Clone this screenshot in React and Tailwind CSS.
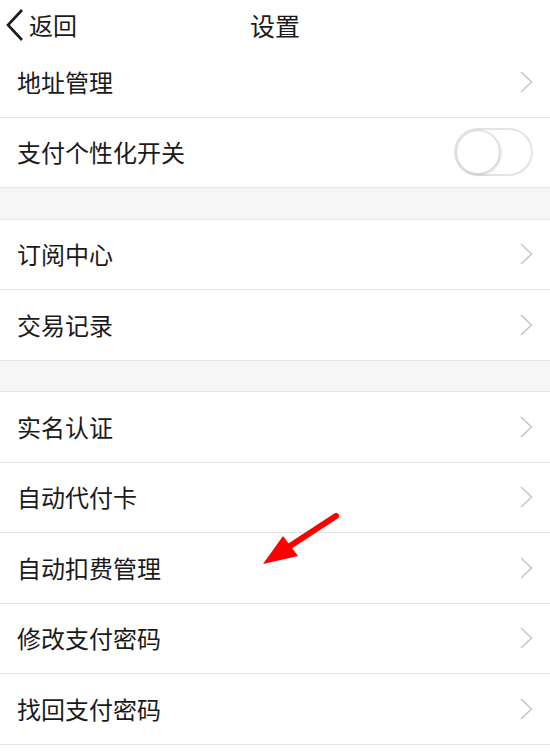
import React from "react"

const font = { fontFamily: '"Noto Sans CJK SC", "Liberation Sans", sans-serif' }

function Chevron() {
    return (
        <svg width="15" height="24" viewBox="0 0 15 24" className="mr-[16px]">
            <path d="M2 2 L12.5 12 L2 22" fill="none" stroke="#c7c7c7" strokeWidth="1.6" />
        </svg>
    )
}

function Toggle() {
    return (
        <div className="mr-[17px] h-[48px] w-[79px] rounded-full border-2 border-[#e4e4e4] bg-white relative">
            <div className="absolute left-0 top-0 h-[44px] w-[44px] rounded-full bg-white border border-[#d8d8d8] shadow-[1px_1px_3px_rgba(0,0,0,0.18)]" />
        </div>
    )
}

function Row({ label, toggle }) {
    return (
        <div className="flex h-[70.5px] items-center justify-between border-b border-[#e6e6e6] bg-white">
            <span className="pl-[17px] text-[24px] text-[#1a1a1a] leading-none">{label}</span>
            {toggle ? <Toggle /> : <Chevron />}
        </div>
    )
}

function Gap() {
    return <div className="h-[31.5px] bg-[#f6f6f6] border-b border-[#e6e6e6]" />
}

export default function App() {
    return (
        <div className="relative h-[756px] w-[550px] overflow-hidden bg-white" style={font}>
            {/* header */}
            <div className="relative flex h-[47px] items-center pt-[3px]">
                <div className="flex items-center pl-[5px]">
                    <svg width="20" height="36" viewBox="0 0 20 36">
                        <path d="M17 3 L3 18 L17 33" fill="none" stroke="#1a1a1a" strokeWidth="2.6" />
                    </svg>
                    <span className="ml-[4px] text-[24px] leading-none text-[#1a1a1a]">返回</span>
                </div>
                <div className="absolute inset-x-0 text-center text-[25px] leading-none text-[#1a1a1a] pointer-events-none">
                    设置
                </div>
            </div>

            <Row label="地址管理" />
            <Row label="支付个性化开关" toggle />
            <Gap />
            <Row label="订阅中心" />
            <Row label="交易记录" />
            <Gap />
            <Row label="实名认证" />
            <Row label="自动代付卡" />
            <Row label="自动扣费管理" />
            <Row label="修改支付密码" />
            <Row label="找回支付密码" />

            {/* red annotation arrow */}
            <svg className="absolute left-0 top-0" width="550" height="756" viewBox="0 0 550 756">
                <line x1="336" y1="516" x2="290" y2="546" stroke="#ff0000" strokeWidth="6" strokeLinecap="round" />
                <polygon points="263,564 283,536 298,556" fill="#ff0000" />
            </svg>
        </div>
    )
}
